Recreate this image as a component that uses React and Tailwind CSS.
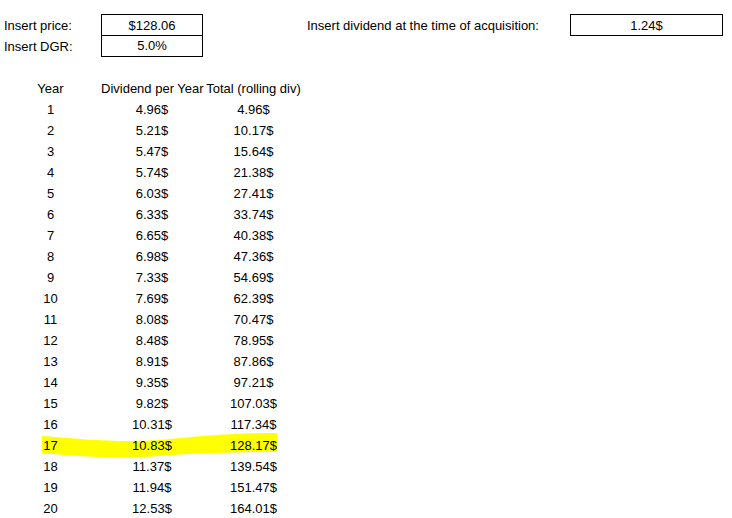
import React from "react";

const rows = [
  ["1", "4.96$", "4.96$"],
  ["2", "5.21$", "10.17$"],
  ["3", "5.47$", "15.64$"],
  ["4", "5.74$", "21.38$"],
  ["5", "6.03$", "27.41$"],
  ["6", "6.33$", "33.74$"],
  ["7", "6.65$", "40.38$"],
  ["8", "6.98$", "47.36$"],
  ["9", "7.33$", "54.69$"],
  ["10", "7.69$", "62.39$"],
  ["11", "8.08$", "70.47$"],
  ["12", "8.48$", "78.95$"],
  ["13", "8.91$", "87.86$"],
  ["14", "9.35$", "97.21$"],
  ["15", "9.82$", "107.03$"],
  ["16", "10.31$", "117.34$"],
  ["17", "10.83$", "128.17$"],
  ["18", "11.37$", "139.54$"],
  ["19", "11.94$", "151.47$"],
  ["20", "12.53$", "164.01$"],
];

export default function App() {
  return (
    <div className="relative w-[732px] h-[518px] overflow-hidden bg-white text-black text-[13px] leading-none" style={{ fontFamily: '"Liberation Sans", Arial, sans-serif' }}>
      {/* marker stroke over year 17 */}
      <svg className="absolute top-0 left-0" width="732" height="518" viewBox="0 0 732 518">
        <path d="M42,436 C80,439 120,443 160,440 C200,436 230,433 277,433 L277,452 C240,452 200,453 160,456 C120,459 80,457 42,453 Z" fill="#ffff00" />
      </svg>

      <div className="relative pt-[14px]">
        <div className="flex h-[21px] items-center">
          <div className="w-[101px] pl-[4px] translate-y-[1px]">Insert price:</div>
          <div className="w-[102px] h-[22px] border border-black flex items-center justify-center pt-[1px]">$128.06</div>
          <div className="w-[104px]" />
          <div className="w-[263px] translate-y-[1px]">Insert dividend at the time of acquisition:</div>
          <div className="w-[153px] h-[22px] border border-black flex items-center justify-center pt-[1px]">1.24$</div>
        </div>
        <div className="flex h-[21px] items-center">
          <div className="w-[101px] pl-[4px] translate-y-[1px]">Insert DGR:</div>
          <div className="w-[102px] h-[22px] mt-[1px] border border-black border-t-0 flex items-center justify-center">5.0%</div>
        </div>
        <div className="h-[21px]" />
        <div className="flex h-[21px] items-center translate-y-[1px]">
          <div className="w-[101px] text-center">Year</div>
          <div className="w-[102px] text-center whitespace-nowrap">Dividend per Year</div>
          <div className="w-[101px] text-center whitespace-nowrap">Total (rolling div)</div>
        </div>
        {rows.map(([y, d, t]) => (
          <div key={y} className="flex h-[21px] items-center">
            <div className="w-[101px] text-center translate-y-[1px]">{y}</div>
            <div className="w-[102px] text-center translate-y-[1px]">{d}</div>
            <div className="w-[101px] text-center translate-y-[1px]">{t}</div>
          </div>
        ))}
      </div>
    </div>
  );
}
